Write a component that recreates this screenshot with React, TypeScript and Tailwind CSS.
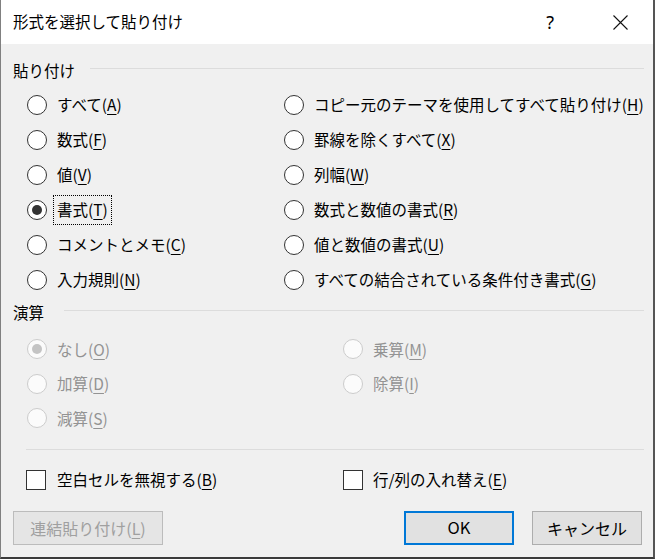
import React from "react";

const FONT = { fontFamily: '"Noto Sans CJK JP", "Noto Sans", sans-serif' };

function U({ c }: { c: string }) {
  return <span className="underline underline-offset-[3px] decoration-1">{c}</span>;
}

function Radio({ checked = false, disabled = false }: { checked?: boolean; disabled?: boolean }) {
  return (
    <span
      className={
        disabled
          ? "w-[20px] h-[20px] rounded-full border border-[#cccccc] bg-[#fbfbfb] flex items-center justify-center shrink-0"
          : "w-[20px] h-[20px] rounded-full border border-[#333333] bg-white flex items-center justify-center shrink-0"
      }
    >
      {checked && (
        <span
          className={disabled ? "w-[10px] h-[10px] rounded-full bg-[#c4c4c4]" : "w-[10px] h-[10px] rounded-full bg-[#333333]"}
        />
      )}
    </span>
  );
}

type Item = { t: string; k: string; checked?: boolean; focus?: boolean };

function RadioRow({ item, disabled = false, h = "h-[35px]" }: { item: Item; disabled?: boolean; h?: string }) {
  return (
    <div className={`flex items-center ${h}`}>
      <Radio checked={item.checked} disabled={disabled} />
      {item.focus ? (
        <span className="ml-[6px] h-[30px] px-[3px] border border-dotted border-black flex items-center leading-none">
          {item.t}(<U c={item.k} />)
        </span>
      ) : (
        <span className={disabled ? "ml-[10px] leading-none text-[#939393]" : "ml-[10px] leading-none text-black"}>
          {item.t}(<U c={item.k} />)
        </span>
      )}
    </div>
  );
}

const pasteLeft: Item[] = [
  { t: "すべて", k: "A" },
  { t: "数式", k: "F" },
  { t: "値", k: "V" },
  { t: "書式", k: "T", checked: true, focus: true },
  { t: "コメントとメモ", k: "C" },
  { t: "入力規則", k: "N" },
];
const pasteRight: Item[] = [
  { t: "コピー元のテーマを使用してすべて貼り付け", k: "H" },
  { t: "罫線を除くすべて", k: "X" },
  { t: "列幅", k: "W" },
  { t: "数式と数値の書式", k: "R" },
  { t: "値と数値の書式", k: "U" },
  { t: "すべての結合されている条件付き書式", k: "G" },
];

export default function App() {
  return (
    <div
      className="w-[655px] h-[559px] bg-[#f0f0f0] border-l border-r-2 border-l-[#808080] border-r-[#555555] border-b-2 border-b-[#3a3a3a] flex flex-col text-[15.5px] text-black overflow-hidden"
      style={FONT}
    >
      {/* Title bar */}
      <div className="h-[44px] bg-white flex items-center shrink-0">
        <span className="ml-[12px] leading-none">形式を選択して貼り付け</span>
        <div className="flex-1" />
        <span className="text-[18px] leading-none mr-[59px]" style={{ fontFamily: '"Noto Sans", sans-serif' }}>?</span>
        <svg width="15" height="15" viewBox="0 0 15 15" className="mr-[25px]">
          <path d="M0.5 0.5 L14.5 14.5 M14.5 0.5 L0.5 14.5" stroke="#111" strokeWidth="1.1" fill="none" />
        </svg>
      </div>

      {/* Body */}
      <div className="flex flex-col pl-[12px] pr-[9px] flex-1">
        {/* 貼り付け header */}
        <div className="h-[24px] mt-[14px] flex items-start">
          <span className="leading-[24px]">貼り付け</span>
          <div className="flex-1 h-px bg-[#dcdcdc] mt-[10px] ml-[15px]" />
        </div>

        <div className="grid grid-cols-[257px_1fr] pl-[14px] mt-[5px]">
          <div className="flex flex-col">
            {pasteLeft.map((it) => (
              <RadioRow key={it.k} item={it} />
            ))}
          </div>
          <div className="flex flex-col">
            {pasteRight.map((it) => (
              <RadioRow key={it.k} item={it} />
            ))}
          </div>
        </div>

        {/* 演算 header */}
        <div className="h-[24px] mt-[3px] flex items-start">
          <span className="leading-[24px]">演算</span>
          <div className="flex-1 h-px bg-[#dcdcdc] mt-[10px] ml-[20px]" />
        </div>

        <div className="grid grid-cols-[316px_1fr] pl-[14px] mt-[8px]">
          <div className="flex flex-col">
            <RadioRow item={{ t: "なし", k: "O", checked: true }} disabled h="h-[34.5px]" />
            <RadioRow item={{ t: "加算", k: "D" }} disabled h="h-[34.5px]" />
            <RadioRow item={{ t: "減算", k: "S" }} disabled h="h-[34.5px]" />
          </div>
          <div className="flex flex-col">
            <RadioRow item={{ t: "乗算", k: "M" }} disabled h="h-[34.5px]" />
            <RadioRow item={{ t: "除算", k: "I" }} disabled h="h-[34.5px]" />
          </div>
        </div>

        <div className="ml-[13px] h-px bg-[#dcdcdc] mt-[13px]" />

        {/* Checkboxes */}
        <div className="grid grid-cols-[317px_1fr] pl-[13px] mt-[20px]">
          <div className="flex items-center h-[20px]">
            <span className="w-[20px] h-[20px] border border-[#333333] bg-white shrink-0" />
            <span className="ml-[11px] leading-none">空白セルを無視する(<U c="B" />)</span>
          </div>
          <div className="flex items-center h-[20px]">
            <span className="w-[20px] h-[20px] border border-[#333333] bg-white shrink-0" />
            <span className="ml-[10px] leading-none">行/列の入れ替え(<U c="E" />)</span>
          </div>
        </div>

        {/* Buttons */}
        <div className="flex items-center mt-[21px] pr-[2px]">
          <div className="w-[150px] h-[34px] border border-[#bcbcbc] bg-[#e5e5e5] flex items-center justify-center text-[#a0a0a0] leading-none text-[16px]">
            連結貼り付け(<U c="L" />)
          </div>
          <div className="flex-1" />
          <div className="w-[110px] h-[34px] border-2 border-[#0078d7] bg-[#e1e1e1] flex items-center justify-center leading-none text-[16.5px]">
            OK
          </div>
          <div className="w-[110px] h-[34px] ml-[18px] border border-[#adadad] bg-[#e1e1e1] flex items-center justify-center leading-none text-[16px]">
            キャンセル
          </div>
        </div>
      </div>
    </div>
  );
}
